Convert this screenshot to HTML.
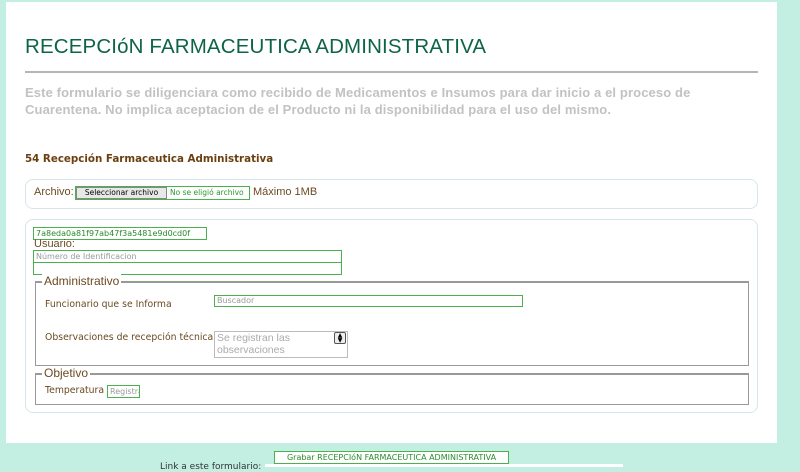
<!DOCTYPE html>
<html><head><meta charset="utf-8"><style>
*{margin:0;padding:0;box-sizing:border-box}
body{width:800px;height:467px;background:#c3efe3;position:relative;overflow:hidden;font-family:"DejaVu Sans","Liberation Sans",sans-serif}
.a{position:absolute;white-space:nowrap}
.panel{left:6px;top:2px;width:771px;height:441px;background:#fff}
.brown{color:#6b4a22}
.inp{border:1px solid #4caf50;background:#fff;font-size:8px;color:#999;padding-left:2px;line-height:9px}
.box{border:1px solid #d6e6ec;border-radius:8px}
.fs{border:1px solid #999;border-top-width:2px}
.leg{background:#fff;padding:0 2px;font-size:12px;color:#6b4a22;font-family:"Liberation Sans",sans-serif}
</style></head><body>
<div class="a panel"></div>
<div class="a" style="left:25px;top:35px;font-family:'Liberation Sans',sans-serif;font-size:20.5px;color:#0e6447;letter-spacing:0.14px">RECEPCIóN FARMACEUTICA ADMINISTRATIVA</div>
<div class="a" style="left:25px;top:71px;width:733px;height:2px;background:#b5b5b5"></div>
<div class="a" style="left:25px;top:84px;font-family:'Liberation Sans',sans-serif;font-size:13px;font-weight:bold;color:#c2c2c2;line-height:17px;letter-spacing:0.12px">Este formulario se diligenciara como recibido de Medicamentos e Insumos para dar inicio a el proceso de<br>Cuarentena. No implica aceptacion de el Producto ni la disponibilidad para el uso del mismo.</div>
<div class="a" style="left:25px;top:153px;font-size:10.3px;font-weight:bold;color:#6b3f10">54 Recepción Farmaceutica Administrativa</div>

<div class="a box" style="left:25px;top:179px;width:733px;height:30px"></div>
<div class="a brown" style="left:34px;top:186px;font-size:11px;font-family:'Liberation Sans',sans-serif">Archivo:</div>
<div class="a" style="left:75px;top:186px;width:175px;height:14px;border:1px solid #4caf50;font-size:7.5px"><span style="display:inline-block;height:12px;width:91px;background:#e8e8e8;border:1px solid #888;text-align:center;line-height:10px;color:#000">Seleccionar archivo</span><span style="color:#2a9a2a;padding-left:3px;vertical-align:top;line-height:12px">No se eligió archivo</span></div>
<div class="a brown" style="left:253px;top:186px;font-size:11px;font-family:'Liberation Sans',sans-serif">Máximo 1MB</div>

<div class="a box" style="left:25px;top:219px;width:733px;height:194px"></div>
<div class="a inp" style="left:33px;top:227px;width:174px;height:13px;color:#2a8a2a;font-size:8px;line-height:11px">7a8eda0a81f97ab47f3a5481e9d0cd0f</div>
<div class="a brown" style="left:34px;top:238px;font-size:11px;font-family:'Liberation Sans',sans-serif">Usuario:</div>
<div class="a inp" style="left:33px;top:250px;width:309px;height:13px;line-height:11px">Número de Identificacion</div>
<div class="a inp" style="left:33px;top:262px;width:309px;height:13px"></div>

<div class="a fs" style="left:35px;top:281px;width:714px;height:85px"></div>
<div class="a leg" style="left:42px;top:274px">Administrativo</div>
<div class="a brown" style="left:45px;top:299px;font-size:9.3px">Funcionario que se Informa</div>
<div class="a inp" style="left:214px;top:295px;width:309px;height:12px;line-height:10px">Buscador</div>
<div class="a brown" style="left:45px;top:332px;font-size:9.3px">Observaciones de recepción técnica</div>
<div class="a" style="left:214px;top:331px;width:134px;height:27px;border:1px solid #bbb;font-size:10.5px;color:#aaa;line-height:12px;padding-left:2px;font-family:'Liberation Sans',sans-serif">Se registran las<br>observaciones</div>
<div class="a" style="left:334px;top:332px;width:12px;height:12px;border:1px solid #555;border-radius:2px;background:#eee;font-size:6px;text-align:center;line-height:5px">▲<br>▼</div>

<div class="a fs" style="left:35px;top:373px;width:714px;height:32px"></div>
<div class="a leg" style="left:42px;top:366px">Objetivo</div>
<div class="a brown" style="left:45px;top:385px;font-size:9.3px">Temperatura</div>
<div class="a inp" style="left:107px;top:385px;width:33px;height:13px;line-height:11px;overflow:hidden">Registra</div>

<div class="a" style="left:274px;top:451px;width:235px;height:13px;border:1px solid #4caf50;background:#fff;font-size:8px;color:#2a8a2a;text-align:center;line-height:11px">Grabar RECEPCIóN FARMACEUTICA ADMINISTRATIVA</div>
<div class="a" style="left:265px;top:464px;width:358px;height:3px;background:#fff"></div>
<div class="a" style="left:160px;top:462px;font-size:9px;color:#333">Link a este formulario:</div>
</body></html>
